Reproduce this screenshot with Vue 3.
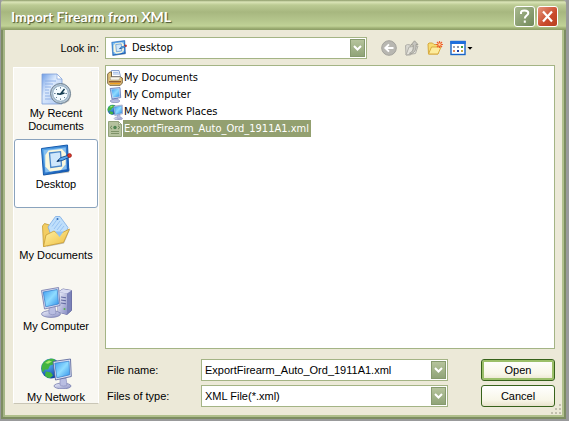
<script setup>
import { ref } from 'vue'

const places = [
  { icon: 'recent', label: 'My Recent Documents' },
  { icon: 'desktop', label: 'Desktop' },
  { icon: 'folder', label: 'My Documents' },
  { icon: 'computer', label: 'My Computer' },
  { icon: 'network', label: 'My Network' }
]
const files = [
  { icon: 'docs-small', name: 'My Documents' },
  { icon: 'computer-small', name: 'My Computer' },
  { icon: 'network', name: 'My Network Places' },
  { icon: 'xml', name: 'ExportFirearm_Auto_Ord_1911A1.xml' }
]
const place = ref('Desktop')
const selected = ref('ExportFirearm_Auto_Ord_1911A1.xml')
const fileName = ref('ExportFirearm_Auto_Ord_1911A1.xml')

function pick(name) {
  selected.value = name
  if (name.endsWith('.xml')) fileName.value = name
}
</script>

<template>
  <svg class="defs" width="0" height="0" aria-hidden="true">
    <defs>
      <linearGradient id="blue" x1="0" y1="0" x2="1" y2="1">
        <stop offset="0" stop-color="#3d9bf0" />
        <stop offset="0.5" stop-color="#8fdcff" />
        <stop offset="1" stop-color="#2f8fea" />
      </linearGradient>
      <linearGradient id="navy" x1="0" y1="0" x2="1" y2="1">
        <stop offset="0" stop-color="#5aaef0" />
        <stop offset="1" stop-color="#0d4fae" />
      </linearGradient>
      <linearGradient id="paper" x1="0" y1="0" x2="1" y2="1">
        <stop offset="0" stop-color="#6f9ee6" />
        <stop offset="0.4" stop-color="#dbe9fc" />
        <stop offset="1" stop-color="#a9c6f2" />
      </linearGradient>
      <linearGradient id="lilac" x1="0" y1="0" x2="1" y2="1">
        <stop offset="0" stop-color="#eef0fb" />
        <stop offset="1" stop-color="#8a90c4" />
      </linearGradient>
      <linearGradient id="gold" x1="0" y1="0" x2="1" y2="1">
        <stop offset="0" stop-color="#fff3a8" />
        <stop offset="1" stop-color="#eebc3c" />
      </linearGradient>
      <radialGradient id="globe" cx="0.35" cy="0.3" r="0.8">
        <stop offset="0" stop-color="#58b4f4" />
        <stop offset="1" stop-color="#06379a" />
      </radialGradient>

      <symbol id="i-recent" viewBox="0 0 32 32">
        <path d="M2 1h15l5 5V31H2z" fill="url(#paper)" stroke="#7f9fd8" stroke-width="0.800" />
        <path d="M17 1v5h5z" fill="#fff" stroke="#86a6dc" stroke-width="0.700" />
        <path d="M5 8h11M5 11h8M5 14h6M5 17h4M5 20h4M5 23h5M5 26h8" stroke="#8fb0e6" />
        <path d="M24 31l5-3 2.500-7z" fill="#8a8a8a" opacity="0.600" />
        <circle cx="20.500" cy="20.500" r="10" fill="#b9cad8" stroke="#6b7f90" />
        <circle cx="20.500" cy="20.500" r="7.800" fill="#f4fcff" stroke="#8ea9bf" />
        <path d="M20.500 14.200v1.300M20.500 25.500v1.300M14.200 20.500h1.300M25.500 20.500h1.300M16 16l.8.8M25 25l-.8-.8M16 25l.8-.8" stroke="#48657e" />
        <path d="M24.500 16L20.500 21M17 20.800l3.200.5 4.300-1.300" stroke="#143c50" stroke-width="1.500" fill="none" />
      </symbol>

      <symbol id="i-desktop" viewBox="0 0 32 32">
        <path d="M3 31.500L29 28.500l1-4-26 4z" fill="#8c8c80" opacity="0.500" />
        <path d="M1.500 4.500L27.500 1l1.300 26L3.500 31z" fill="url(#navy)" stroke="#1459ad" />
        <path d="M3.500 6.200L25.800 3.200l1 22L5.300 28.600z" fill="#86bff0" />
        <path d="M8.500 6.500L22 5l4 4.500-.5 11L21 26 10 27.500l-4.700-5V11z" fill="#fbf8dd" />
        <path d="M9.500 9L20.500 7.700l1 14.300L10.800 23.500z" fill="#cfe7fb" stroke="#4a87c9" stroke-width="1.300" />
        <path d="M17 17.500l3.500-3.800 8-2.500.8 2-7 3.300z" fill="#58a6ee" stroke="#134a8e" stroke-width="0.900" />
        <path d="M16.500 17.800l2.200-2.400.9 1.500z" fill="#0c2a4d" />
        <circle cx="29.500" cy="11.500" r="2" fill="#d9352a" stroke="#8c1a14" stroke-width="0.600" />
      </symbol>

      <symbol id="i-folder" viewBox="0 0 32 32">
        <path d="M6 32l18-3.500 6-14z" fill="#8c8c80" opacity="0.500" />
        <path d="M2.500 11l2-2.500 5 1.500 2 3L22 15l-1 11L3.500 31.500z" fill="#f3cd62" stroke="#c19a35" stroke-width="0.800" />
        <path d="M8 12L15.500 1.500 20 1.500l8 11-4 10-11 3z" fill="#bfdffb" stroke="#7babe3" stroke-width="0.800" />
        <path d="M12 11.500l5-7M14 14l6-8M17 15l5-6.500M20 16l4-5" stroke="#97c3f3" />
        <circle cx="17.500" cy="4" r="1" fill="#2f6dbd" />
        <path d="M3.500 31.500L6 20l8-4 4.500 3.500L29.500 14 23.500 27.500z" fill="url(#gold)" stroke="#c99c33" stroke-width="0.800" />
        <path d="M15.500 16.500h8l-4 5.500z" fill="#8fc1f3" />
      </symbol>

      <symbol id="i-computer" viewBox="0 0 32 32">
        <path d="M18 6l5-3 8.500 1.500v20L27 28.500l-9-2.500z" fill="#7b82b9" stroke="#5a609b" stroke-width="0.800" />
        <path d="M18 6l5-3 8.500 1.500-4.500 3z" fill="#d8dbf1" />
        <path d="M18 6l9 1.500v21L18 26z" fill="url(#lilac)" />
        <path d="M21 11l5 .8M21 14l5 .8M21 17l5 .8" stroke="#5f669f" />
        <circle cx="24.500" cy="23" r="1" fill="#57b052" />
        <ellipse cx="11" cy="28" rx="9.500" ry="3.400" fill="url(#lilac)" stroke="#7a80b0" stroke-width="0.800" />
        <path d="M9 21l6-1 1 7.500c-2 1.500-5 1.500-7 0z" fill="#b9bee2" stroke="#8388b8" stroke-width="0.600" />
        <path d="M1.500 4.500L18.500 1.500l1.500 18L4.500 23z" fill="#d9dcf0" stroke="#6d73a8" stroke-width="0.800" />
        <path d="M3.200 6L17.200 3.500l1.300 14.500L5.800 20.800z" fill="url(#blue)" stroke="#2f79c8" stroke-width="0.700" />
      </symbol>

      <symbol id="i-network" viewBox="0 0 32 32">
        <circle cx="11" cy="11.500" r="10" fill="url(#globe)" />
        <path d="M2 8C4 3.500 9 1.300 14 2L16 4.500l-3 3-3 1-2 4-3 0L3 15.500C1.300 13.500 1.300 10 2 8zM6 14.500l5 1 2 3-3 2.500C7 21 5 19.500 5 17.500z" fill="#41b441" />
        <path d="M5 6l4-2.500 3 1L8 6.800z" fill="#a5e86a" />
        <ellipse cx="22.500" cy="29" rx="8.500" ry="2.900" fill="url(#lilac)" stroke="#7a80b0" stroke-width="0.800" />
        <path d="M20 21h6l1 7c-2 1.500-5 1.500-7 0z" fill="#b9bee2" stroke="#8388b8" stroke-width="0.600" />
        <path d="M13 4.500L30.500 2l.8 17.500L15.500 23z" fill="#dfe2f4" stroke="#4d5b94" stroke-width="0.800" />
        <path d="M14.800 6.200L29 4.200l.7 13.600-12.800 3z" fill="url(#blue)" stroke="#2f79c8" stroke-width="0.700" />
      </symbol>

      <symbol id="i-docs-small" viewBox="0 0 16 16">
        <path d="M4.500.5H12l1.500 6H4z" fill="#fff" stroke="#6d8cc4" stroke-width="0.800" />
        <path d="M6 2.300h5.500M6 4h6" stroke="#7fa3df" stroke-width="0.800" />
        <path d="M.7 4l2-2h1.800v5H13.500l1.800 1v5l-2 2.300H2.700l-2-2z" fill="#e2c37c" stroke="#6b5630" stroke-width="0.900" />
        <path d="M3 7h10.500l-1.500 3H3.500z" fill="#f7f5ec" stroke="#998f78" stroke-width="0.500" />
        <path d="M2 11.800h12" stroke="#7b3f1e" stroke-width="1.200" />
        <path d="M3 13.500h10" stroke="#f2a01e" stroke-width="1.200" />
      </symbol>

      <symbol id="i-computer-small" viewBox="0 0 16 16">
        <ellipse cx="8" cy="14" rx="4.800" ry="1.700" fill="#b9bee2" stroke="#7a80b0" stroke-width="0.600" />
        <path d="M7 10h4v3.500H7z" fill="#a9afd8" />
        <path d="M3.200 1.500L13 .6l.7 10L5 12z" fill="#cdd6f0" stroke="#5874b4" stroke-width="0.800" />
        <path d="M4.400 2.500L12 1.700l.6 7.900-6.600.9z" fill="url(#blue)" />
      </symbol>

      <symbol id="i-xml" viewBox="0 0 16 16">
        <path d="M1.500.5h10l3 3v12h-13z" fill="#b5c29e" stroke="#93a27b" />
        <path d="M11.500.5v3h3z" fill="#dde3cf" stroke="#8b9a72" stroke-width="0.700" />
        <path d="M5 4.800L3.200 6.500 5 8.200M11 4.800l1.800 1.700L11 8.200" fill="none" stroke="#6b8659" />
        <circle cx="8" cy="6.500" r="1.700" fill="#4c8350" />
        <path d="M4 10.500h8M4 12.500h8" stroke="#7e9268" />
      </symbol>
    </defs>
  </svg>

  <form class="window" @submit.prevent>
    <header class="titlebar">
      <h1>Import Firearm from XML</h1>
      <button type="button" class="cap help" aria-label="Help">
        <svg viewBox="0 0 19 19" width="19" height="19"><path d="M6 7V5.500C6 4 7.300 3.500 9.500 3.500S13.300 4.300 13.300 6c0 2.500-3.500 2.500-3.500 5.500M9.800 13.500v2.200" fill="none" stroke="#fff" stroke-width="2" /></svg>
      </button>
      <button type="button" class="cap close" aria-label="Close">
        <svg viewBox="0 0 19 19" width="19" height="19"><path d="M5 4.500l9 10M14 4.500l-9 10" fill="none" stroke="#fff" stroke-width="2.200" /></svg>
      </button>
    </header>

    <div class="content">
      <label class="lookin" for="lookin">Look in:</label>
      <div class="topbar">
        <div class="combo with-icon">
          <svg class="lead" width="16" height="16"><use href="#i-desktop" /></svg>
          <select id="lookin" v-model="place">
            <option>Desktop</option>
          </select>
          <span class="drop" aria-hidden="true"><svg viewBox="0 0 9 7" width="9" height="7"><path d="M1 1l3.500 3.500L8 1" fill="none" stroke="#fff" stroke-width="2" /></svg></span>
        </div>
        <div class="tools">
          <button type="button" aria-label="Back">
            <svg viewBox="0 0 16 16" width="16" height="16"><circle cx="8" cy="8" r="7.300" fill="#b8b7b1" stroke="#a3a29c" /><path d="M12.500 8H4.500M8 4.300L4.300 8 8 11.700" fill="none" stroke="#fff" stroke-width="1.900" /></svg>
          </button>
          <button type="button" aria-label="Up one level">
            <svg viewBox="0 0 16 16" width="16" height="16"><path d="M1.500 5.500l2-1 3 .5V15H2z" fill="#d8d7d0" stroke="#b0afa8" /><path d="M2 15l3-8 9-1-2.500 7.500z" fill="#e4e3dc" stroke="#b0afa8" /><path d="M5.500 13c3.500-1 4-4 3.700-8H7L10.500.8 14 4.500h-2c.5 5-1 8-5.500 9.500z" fill="#c6c5bf" stroke="#94938c" stroke-width="0.800" /></svg>
          </button>
          <button type="button" aria-label="Create new folder">
            <svg viewBox="0 0 16 16" width="16" height="16"><path d="M1 4l1-1h3.500l1.500 1.500h4V14H1.500z" fill="#f7dc72" stroke="#d6a93c" /><path d="M1.500 14l3-7H14l-3 7z" fill="#fdec9c" stroke="#d8ab40" /><path d="M12.500 1v7M9 4.500h7M10 2l5 5M15 2l-5 5" stroke="#f0602c" stroke-width="1.200" /><circle cx="12.500" cy="4.500" r="1.200" fill="#ffd9a0" /></svg>
          </button>
          <button type="button" aria-label="View menu">
            <svg viewBox="0 0 23 16" width="23" height="16"><rect x="1" y="1.500" width="14" height="13" fill="#fff" stroke="#1664c8" stroke-width="1.400" /><path d="M.3 1h15.400v3H.3z" fill="#1d6edc" /><path d="M3 6h2v2H3z" fill="#9aa3b8" /><path d="M7 6h2v2H7z" fill="#8f99ad" /><path d="M11 6h2v2h-2z" fill="#3f9e46" /><path d="M3 10h2v2H3z" fill="#e08a5a" /><path d="M7 10h2v2H7z" fill="#1f3f9e" /><path d="M11 10h2v2h-2z" fill="#c9a640" /><path d="M17.500 7h5L20 9.800z" fill="#000" /></svg>
          </button>
        </div>
      </div>

      <nav class="places" aria-label="Places">
        <button v-for="p in places" :key="p.label" type="button" :class="{ active: p.label === place }">
          <svg width="32" height="32"><use :href="'#i-' + p.icon" /></svg>
          <span>{{ p.label }}</span>
        </button>
      </nav>

      <ul class="files">
        <li v-for="f in files" :key="f.name">
          <button type="button" :class="{ selected: f.name === selected }" @click="pick(f.name)">
            <svg width="16" height="16"><use :href="'#i-' + f.icon" /></svg>
            <span>{{ f.name }}</span>
          </button>
        </li>
      </ul>

      <footer class="fields">
        <label for="fname">File name:</label>
        <div class="combo">
          <input id="fname" v-model="fileName" type="text" />
          <button type="button" class="drop" aria-label="Show recent names"><svg viewBox="0 0 9 7" width="9" height="7"><path d="M1 1l3.500 3.500L8 1" fill="none" stroke="#fff" stroke-width="2" /></svg></button>
        </div>
        <button type="submit" class="action primary">Open</button>
        <label for="ftype">Files of type:</label>
        <div class="combo">
          <select id="ftype">
            <option>XML File(*.xml)</option>
          </select>
          <span class="drop" aria-hidden="true"><svg viewBox="0 0 9 7" width="9" height="7"><path d="M1 1l3.500 3.500L8 1" fill="none" stroke="#fff" stroke-width="2" /></svg></span>
        </div>
        <button type="button" class="action">Cancel</button>
      </footer>
      <svg class="grip" viewBox="0 0 12 12" width="12" height="12" aria-hidden="true"><path d="M8 0h2v2H8zM4 4h2v2H4zM8 4h2v2H8zM0 8h2v2H0zM4 8h2v2H4zM8 8h2v2H8z" fill="#c2bfae" /></svg>
    </div>
  </form>
</template>

<style>
body {
  margin: 0;
  background: #a3a3a1;
}
</style>

<style scoped>
.defs {
  position: absolute;
}
.window {
  box-sizing: border-box;
  min-height: 100vh;
  display: flex;
  flex-direction: column;
  border: solid #999a9b;
  border-width: 0 3px 2px 1px;
  color: #000;
  font: 11px/14px "Liberation Sans", Arial, sans-serif;
}
.window button,
.window input,
.window select {
  font: inherit;
  color: inherit;
  margin: 0;
}
.titlebar {
  display: flex;
  align-items: center;
  gap: 2px;
  height: 30px;
  box-sizing: border-box;
  padding: 3px 8px 0 10px;
  border-radius: 4px 4px 0 0;
  background: linear-gradient(#8c9a68 0, #dbe5b8 2px, #bccb94 5px, #a7b77f 12px, #b4c58c 20px, #c0d296 26px, #a0b176 28px, #8b9c64 30px);
}
.titlebar h1 {
  flex: 1;
  margin: 0;
  color: #fff;
  font: bold 14px/18px Lato, sans-serif;
  text-shadow: 1px 1px 1px #4a5630;
}
.cap {
  width: 21px;
  height: 21px;
  padding: 0;
  border: 1px solid #fff;
  border-radius: 3px;
  display: grid;
  place-items: center;
}
.cap.help {
  background: linear-gradient(135deg, #a9b98f, #71885a);
}
.cap.close {
  background: linear-gradient(135deg, #e5967c, #c94a2b 60%, #b84020);
}
.content {
  position: relative;
  flex: 1;
  display: grid;
  grid-template-columns: 86px minmax(0, 1fr);
  grid-template-rows: auto minmax(0, 1fr) auto;
  column-gap: 6px;
  padding: 7px 9px 10px 10px;
  background: #ece9d8;
  border: solid #7d8d62;
  border-width: 0 2px 2px;
  box-shadow: inset 2px 0 #a5b686, inset -2px 0 #b0c08c, inset 0 -2px #b0c08c;
}
.lookin {
  align-self: center;
  text-align: right;
}
.topbar {
  display: flex;
  align-items: center;
}
.topbar .combo {
  flex: 0 1 262px;
}
.combo {
  position: relative;
  box-sizing: border-box;
  height: 22px;
  min-width: 0;
  display: flex;
  align-items: center;
  background: #fff;
  border: 1px solid #a4b485;
}
.combo input,
.combo select {
  flex: 1;
  min-width: 0;
  height: 18px;
  padding: 0 20px 0 3px;
  border: 0;
  outline: 0;
  background: transparent;
  appearance: none;
}
.combo.with-icon {
  padding-left: 5px;
}
.with-icon select {
  padding-left: 5px;
  font-family: "DejaVu Sans Condensed", "DejaVu Sans", sans-serif;
}
.drop {
  position: absolute;
  top: 1px;
  right: 1px;
  bottom: 1px;
  width: 15px;
  padding: 0;
  box-sizing: border-box;
  border: 1px solid #869a6e;
  display: grid;
  place-items: center;
  background: linear-gradient(#b5c39c, #90a478);
  pointer-events: none;
}
button.drop {
  pointer-events: auto;
}
.tools {
  display: flex;
  gap: 7px;
  margin-left: 14px;
}
.tools button {
  display: block;
  padding: 0;
  border: 0;
  background: none;
}
.tools svg {
  display: block;
}
.places {
  grid-row: 2 / 4;
  contain: size;
  display: flex;
  flex-direction: column;
  gap: 2px;
  margin: 8px 0 3px;
  border: 1px solid #fff;
  border-bottom-color: #c9c6b6;
  background: #f8f7f1;
  overflow: hidden;
}
.places button {
  flex: none;
  box-sizing: border-box;
  height: 69px;
  width: 84px;
  padding: 4px 4px 0;
  border: 1px solid transparent;
  border-radius: 3px;
  background: none;
  display: flex;
  flex-direction: column;
  align-items: center;
  line-height: 13px;
  gap: 2px;
}
.places button.active {
  background: #fff;
  border-color: #8aa3bd;
}
.places svg {
  flex: none;
}
.files {
  list-style: none;
  margin: 6px 0 10px;
  padding: 3px 1px;
  background: #fff;
  border: 1px solid #a4b485;
  font-family: "DejaVu Sans Condensed", "DejaVu Sans", sans-serif;
}
.files button {
  display: flex;
  align-items: center;
  height: 17px;
  padding: 0;
  border: 0;
  background: none;
}
.files span {
  padding: 2px 2px 1px 1px;
}
.files .selected span {
  background: #93a070;
  color: #fff;
}
.fields {
  display: grid;
  grid-template-columns: 96px minmax(0, 1fr) 74px;
  row-gap: 4px;
  align-items: center;
}
.fields label {
  padding-left: 2px;
}
.fields .combo {
  margin-right: 33px;
}
.action {
  height: 22px;
  padding: 0;
  border: 1px solid #37621b;
  border-radius: 3px;
  background: linear-gradient(#fff, #f8f6e8 70%, #e9e3cd);
}
.action.primary {
  box-shadow: inset 0 0 0 2px #9bbf6a;
}
.grip {
  position: absolute;
  right: 1px;
  bottom: 1px;
}
</style>
